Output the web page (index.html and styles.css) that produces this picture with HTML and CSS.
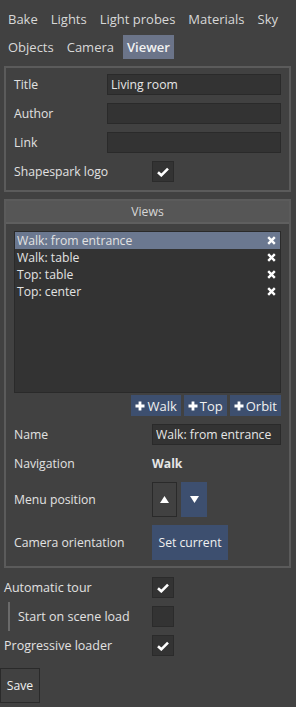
FILE: index.html
```html
<!DOCTYPE html>
<html lang="en">
<head>
  <meta charset="UTF-8">
  <title>Viewer settings</title>
  <link rel="stylesheet" href="styles.css">
</head>
<body>
  <nav class="tabs">
    <span class="tab">Bake</span>
    <span class="tab">Lights</span>
    <span class="tab">Light probes</span>
    <span class="tab">Materials</span>
    <span class="tab">Sky</span>
    <span class="tab">Objects</span>
    <span class="tab">Camera</span>
    <span class="tab active">Viewer</span>
  </nav>

  <section class="panel info">
    <div class="row">
      <label class="lbl">Title</label>
      <input class="field wide" value="Living room">
    </div>
    <div class="row">
      <label class="lbl">Author</label>
      <input class="field wide">
    </div>
    <div class="row">
      <label class="lbl">Link</label>
      <input class="field wide">
    </div>
    <div class="row">
      <label class="lbl2">Shapespark logo</label>
      <span class="check">
        <svg width="12" height="10" viewBox="0 0 12 10"><path d="M1 5.2 L4.3 8.3 L11 1.6" fill="none" stroke="#fff" stroke-width="2.6"/></svg>
      </span>
    </div>
  </section>

  <section class="panel views">
    <div class="panel-head">Views</div>
    <div class="panel-body">
      <ul class="view-list">
        <li class="selected">Walk: from entrance <span class="del"><svg width="9" height="9" viewBox="0 0 9 9"><path d="M1.2 1.2 L7.8 7.8 M7.8 1.2 L1.2 7.8" stroke="#fff" stroke-width="2.4"/></svg></span></li>
        <li>Walk: table <span class="del"><svg width="9" height="9" viewBox="0 0 9 9"><path d="M1.2 1.2 L7.8 7.8 M7.8 1.2 L1.2 7.8" stroke="#fff" stroke-width="2.4"/></svg></span></li>
        <li>Top: table <span class="del"><svg width="9" height="9" viewBox="0 0 9 9"><path d="M1.2 1.2 L7.8 7.8 M7.8 1.2 L1.2 7.8" stroke="#fff" stroke-width="2.4"/></svg></span></li>
        <li>Top: center <span class="del"><svg width="9" height="9" viewBox="0 0 9 9"><path d="M1.2 1.2 L7.8 7.8 M7.8 1.2 L1.2 7.8" stroke="#fff" stroke-width="2.4"/></svg></span></li>
      </ul>

      <div class="add-row">
        <button class="btn blue add"><svg class="plus" width="10" height="10" viewBox="0 0 10 10"><path d="M5 0.5 V9.5 M0.5 5 H9.5" stroke="#fff" stroke-width="2.8"/></svg>Walk</button>
        <button class="btn blue add"><svg class="plus" width="10" height="10" viewBox="0 0 10 10"><path d="M5 0.5 V9.5 M0.5 5 H9.5" stroke="#fff" stroke-width="2.8"/></svg>Top</button>
        <button class="btn blue add"><svg class="plus" width="10" height="10" viewBox="0 0 10 10"><path d="M5 0.5 V9.5 M0.5 5 H9.5" stroke="#fff" stroke-width="2.8"/></svg>Orbit</button>
      </div>

      <div class="row">
        <label class="lbl2">Name</label>
        <input class="field wide" value="Walk: from entrance">
      </div>
      <div class="row">
        <label class="lbl2">Navigation</label>
        <b class="value">Walk</b>
      </div>
      <div class="row tall">
        <label class="lbl2">Menu position</label>
        <button class="btn arrow outline">
          <svg width="9" height="7" viewBox="0 0 9 7"><path d="M4.5 0 L9 7 L0 7 Z" fill="#fff"/></svg>
        </button>
        <button class="btn arrow blue">
          <svg width="9" height="7" viewBox="0 0 9 7"><path d="M0 0 L9 0 L4.5 7 Z" fill="#fff"/></svg>
        </button>
      </div>
      <div class="row tall">
        <label class="lbl2">Camera orientation</label>
        <button class="btn blue setcur">Set current</button>
      </div>
    </div>
  </section>

  <div class="extras">
    <div class="row">
      <label class="lbl3">Automatic tour</label>
      <span class="check">
        <svg width="12" height="10" viewBox="0 0 12 10"><path d="M1 5.2 L4.3 8.3 L11 1.6" fill="none" stroke="#fff" stroke-width="2.6"/></svg>
      </span>
    </div>
    <div class="row sub">
      <label class="lbl3 indent">Start on scene load</label>
      <span class="check"></span>
    </div>
    <div class="row">
      <label class="lbl3">Progressive loader</label>
      <span class="check">
        <svg width="12" height="10" viewBox="0 0 12 10"><path d="M1 5.2 L4.3 8.3 L11 1.6" fill="none" stroke="#fff" stroke-width="2.6"/></svg>
      </span>
    </div>
  </div>

  <button class="btn save">Save</button>
</body>
</html>
```

FILE: styles.css
```css
body {
  margin: 0;
  background: #414141;
  color: #e2e2e2;
  font-family: "Open Sans", "Noto Sans", sans-serif;
  font-size: 12.2px;
}

.tabs {
  display: flex;
  flex-wrap: wrap;
  gap: 4px 5px;
  padding: 7px 0 0 4px;
  font-size: 13px;
}

.tab {
  padding: 0 4px;
  line-height: 24px;
  color: #d8d8d8;
}

.tab.active {
  background: #6b7489;
  color: #f2f2f2;
  font-weight: 600;
}

.panel {
  margin: 7px 5px 0 4px;
  border: 2px solid #5b5b5b;
}

.row {
  display: flex;
  align-items: center;
  height: 21px;
}

.row label {
  flex: none;
  white-space: nowrap;
}

.info {
  padding: 6px 8px 8px 8px;
  display: flex;
  flex-direction: column;
  gap: 8px;
}

.lbl {
  width: 93px;
}

.lbl2 {
  width: 138px;
}

.field {
  background: #333;
  border: 1px solid #2a2a2a;
  height: 21px;
  box-sizing: border-box;
  color: #e6e6e6;
  font-family: inherit;
  font-size: 12.2px;
  padding: 0 3px;
  outline: none;
}

.wide {
  flex: 1;
  min-width: 0;
}

.check {
  width: 22px;
  height: 21px;
  box-sizing: border-box;
  background: #333;
  border: 1px solid #2b2b2b;
  display: flex;
  align-items: center;
  justify-content: center;
}

.panel-head {
  background: #565656;
  border-bottom: 2px solid #5f5f5f;
  text-align: center;
  line-height: 21px;
  color: #d6d6d6;
}

.panel-body {
  padding: 7px 8px 6px 8px;
  display: flex;
  flex-direction: column;
  gap: 8px;
}

.view-list {
  list-style: none;
  margin: 0;
  padding: 0;
  height: 162px;
  box-sizing: border-box;
  background: #333;
  border: 1px solid #2a2a2a;
}

.view-list li {
  display: flex;
  justify-content: space-between;
  align-items: center;
  height: 17px;
  padding: 0 4px 0 2px;
  color: #e2e2e2;
}

.view-list li.selected {
  background: #6b7890;
}

.del {
  display: flex;
}

.add-row {
  display: flex;
  justify-content: flex-end;
  gap: 3px;
  margin-top: -6px;
}

.btn {
  font-family: inherit;
  font-size: 12.2px;
  color: #f0f0f0;
  border: none;
  padding: 0;
  cursor: pointer;
}

.blue {
  background: #3d4f6f;
}

.add {
  height: 21px;
  padding: 0 4px;
  display: flex;
  align-items: center;
  font-size: 13px;
}

.plus {
  margin-right: 2px;
}

.value {
  color: #e6e6e6;
}

.row.tall {
  height: 35px;
}

.arrow {
  width: 26px;
  height: 35px;
  display: flex;
  align-items: center;
  justify-content: center;
  margin-right: 4px;
}

.outline {
  background: transparent;
  border: 1px solid #2a2a2a;
  box-sizing: border-box;
  width: 25px;
}

.setcur {
  height: 35px;
  width: 76px;
}

.extras {
  margin-top: 9px;
  display: flex;
  flex-direction: column;
  gap: 8px;
  font-size: 12.5px;
}

.lbl3 {
  width: 148px;
  padding-left: 4px;
}

.sub {
  height: 29px;
  margin: -4px 0;
}

.indent {
  margin-left: 8px;
  border-left: 2px solid #6a6a6a;
  padding-left: 8px;
  width: 134px;
  line-height: 29px;
}

.save {
  margin-top: 12px;
  background: transparent;
  border: 1px solid #2a2a2a;
  height: 35px;
  width: 40px;
  display: block;
}
```
